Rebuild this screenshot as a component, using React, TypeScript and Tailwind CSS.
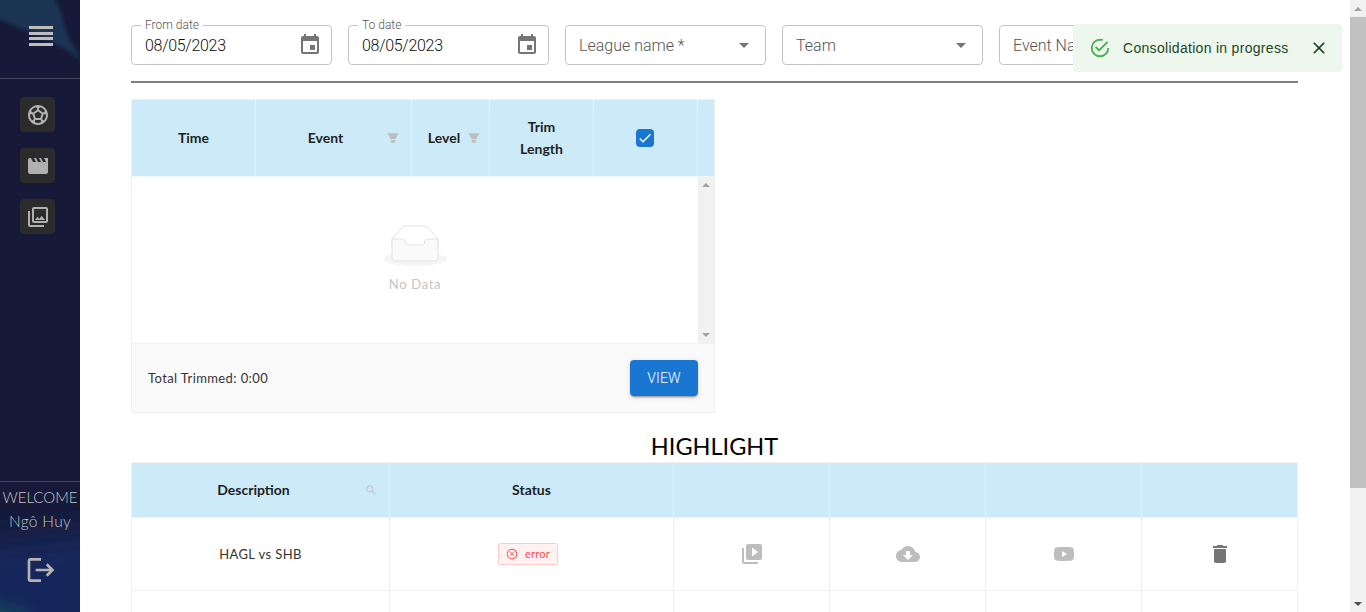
import type { ReactNode } from 'react';
import { AiOutlineCloseCircle, AiOutlineSearch } from 'react-icons/ai';
import {
  MdArrowDropDown,
  MdCheck,
  MdClose,
  MdCloudDownload,
  MdDelete,
  MdEvent,
  MdLogout,
  MdMovie,
  MdOutlinePhotoLibrary,
  MdOutlineSportsSoccer,
  MdVideoLibrary,
} from 'react-icons/md';

function FilterIcon() {
  return (
    <svg viewBox="64 64 896 896" className="h-3 w-3" fill="#bfbfbf">
      <path d="M349 838c0 17.7 14.2 32 31.7 32h262.6c17.5 0 31.7-14.3 31.7-32V642H349v196zm531.1-684H143.9c-24.5 0-39.8 26.7-27.5 48l221.3 376h348.8l221.3-376c12.3-21.3-3-48-27.5-48z" />
    </svg>
  );
}

function YoutubeIcon() {
  return (
    <svg viewBox="0 0 24 24" width="24" height="24" fill="currentColor">
      <path d="M10 15l5.19-3L10 9v6m11.56-7.83c.13.47.22 1.1.28 1.9.07.8.1 1.49.1 2.09L22 12c0 2.19-.16 3.8-.44 4.83-.25.9-.83 1.48-1.73 1.73-.47.13-1.33.22-2.65.28-1.3.07-2.49.1-3.59.1L12 19c-4.19 0-6.8-.16-7.83-.44-.9-.25-1.48-.83-1.73-1.73-.13-.47-.22-1.1-.28-1.9-.07-.8-.1-1.49-.1-2.09L2 12c0-2.19.16-3.8.44-4.83.25-.9.83-1.48 1.73-1.73.47-.13 1.33-.22 2.65-.28 1.3-.07 2.49-.1 3.59-.1L12 5c4.19 0 6.8.16 7.83.44.9.25 1.48.83 1.73 1.73z" />
    </svg>
  );
}

function EmptyIcon() {
  return (
    <svg width="64" height="41" viewBox="0 0 64 41">
      <g transform="translate(0 1)" fill="none" fillRule="evenodd">
        <ellipse fill="#f5f5f5" cx="32" cy="33" rx="32" ry="7" />
        <g fillRule="nonzero" stroke="#e2e2e2">
          <path d="M55 12.76L44.854 1.258C44.367.474 43.656 0 42.907 0H21.093c-.749 0-1.46.474-1.947 1.257L9 12.761V22h46v-9.24z" />
          <path
            d="M41.613 15.931c0-1.605.994-2.93 2.227-2.931H55v18.137C55 33.26 53.68 35 52.05 35h-40.1C10.32 35 9 33.259 9 31.137V13h11.16c1.233 0 2.227 1.323 2.227 2.928v.022c0 1.605 1.005 2.901 2.237 2.901h14.752c1.232 0 2.237-1.308 2.237-2.913v-.007z"
            fill="#fafafa"
          />
        </g>
      </g>
    </svg>
  );
}

// background art of the sidebar
function SidebarArt() {
  return (
    <svg className="absolute inset-0 h-full w-full" viewBox="0 0 80 612" preserveAspectRatio="none">
      <defs>
        <filter id="soft" filterUnits="userSpaceOnUse" x="-60" y="-60" width="200" height="200">
          <feGaussianBlur stdDeviation="2" />
        </filter>
        <filter id="softer" filterUnits="userSpaceOnUse" x="-100" y="400" width="300" height="320">
          <feGaussianBlur stdDeviation="16" />
        </filter>
        <filter id="corner" filterUnits="userSpaceOnUse" x="-100" y="500" width="300" height="220">
          <feGaussianBlur stdDeviation="7" />
        </filter>
      </defs>
      <path d="M-5 -5H52C60 8 62 14 62 18C66 34 74 50 85 64C72 52 58 44 44 38C28 30 12 26 -5 16Z" fill="#1a3654" filter="url(#soft)" />
      <path d="M-40 545L120 525V660H-40Z" fill="#18255a" filter="url(#softer)" />
      <path d="M-20 598L30 612V630H-20Z" fill="#15425e" filter="url(#corner)" />
    </svg>
  );
}

function Field({ label, value, children }: { label?: string; value: string; children?: ReactNode }) {
  return (
    <div className="relative flex h-10 w-[201px] shrink-0 items-center justify-between rounded border border-[#c4c4c4] pl-[13px] pr-[9px] font-['Roboto',sans-serif] text-base">
      {label && (
        <span className="absolute left-[9px] top-[-8px] bg-white px-1 text-xs font-light leading-[14px] text-[#555]">
          {label}
        </span>
      )}
      <span className={`pt-[2px] font-light ${label ? 'tracking-[-0.3px] text-[#111]' : 'text-[#555]'}`}>{value}</span>
      {children}
    </div>
  );
}

function SideButton({ children }: { children: ReactNode }) {
  return (
    <div className="flex h-[35px] w-[35px] items-center justify-center rounded bg-[#2b2b2b] text-[#b0b0b0]">
      {children}
    </div>
  );
}

function Sidebar() {
  return (
    <aside className="relative flex h-full w-20 shrink-0 flex-col overflow-hidden bg-[#161a38] font-['Lato',sans-serif]">
      <SidebarArt />
      <div className="relative flex h-[79px] items-start justify-center border-b border-[#ffffff33] pl-[2px] pt-[26px]">
        <div className="flex w-6 flex-col gap-[2.6px]">
          <span className="h-[3px] bg-[#bdbdbd]" />
          <span className="h-[3px] bg-[#bdbdbd]" />
          <span className="h-[3px] bg-[#bdbdbd]" />
          <span className="h-[3px] bg-[#bdbdbd]" />
        </div>
      </div>
      <nav className="relative flex flex-col gap-4 pl-5 pt-[18px]">
        <SideButton>
          <MdOutlineSportsSoccer size={24} />
        </SideButton>
        <SideButton>
          <MdMovie size={24} />
        </SideButton>
        <SideButton>
          <MdOutlinePhotoLibrary size={24} />
        </SideButton>
      </nav>
      <div className="relative mt-auto flex h-[131px] flex-col items-center border-t border-[#ffffff33] pt-[4px] font-light text-[#c4c4c4]">
        <span className="text-[15px] leading-[22px]">WELCOME</span>
        <span className="mt-[2px] text-[15.5px] leading-[22px] tracking-[0.3px]">Ngô Huy</span>
        <MdLogout size={32} className="ml-[2px] mt-[22px] text-[#b4b4b4]" />
      </div>
    </aside>
  );
}

function ScrollArrow({ down, dark }: { down?: boolean; dark?: boolean }) {
  return (
    <span
      className={`h-0 w-0 border-x-[4px] border-x-transparent ${
        down ? 'border-t-[4px]' : 'border-b-[4px]'
      } ${dark ? 'border-t-[#505050] border-b-[#505050]' : 'border-t-[#a3a3a3] border-b-[#a3a3a3]'}`}
    />
  );
}

function HeaderCell({ children, className = '' }: { children?: ReactNode; className?: string }) {
  return (
    <div className={`relative flex items-center justify-center border-r border-[#e6f4fb] text-center ${className}`}>
      {children}
    </div>
  );
}

function TrimTable() {
  return (
    <section className="w-[584px] border border-[#f0f0f0] font-['Lato',sans-serif] text-sm text-[#1f1f1f]">
      <div className="grid h-[77px] grid-cols-[124px_156px_78px_104px_104px_1fr] border-b border-[#eef6fa] bg-[#cdeaf9] font-bold">
        <HeaderCell>Time</HeaderCell>
        <HeaderCell>
          <span className="pr-[16px]">Event</span>
          <span className="absolute right-[12px] top-[32px]">
            <FilterIcon />
          </span>
        </HeaderCell>
        <HeaderCell>
          <span className="pr-[13px]">Level</span>
          <span className="absolute right-[9px] top-[32px]">
            <FilterIcon />
          </span>
        </HeaderCell>
        <HeaderCell className="leading-[22px]">
          Trim
          <br />
          Length
        </HeaderCell>
        <HeaderCell>
          <span className="flex h-[18px] w-[18px] -translate-x-px items-center justify-center rounded-sm bg-[#1976d2] text-white">
            <MdCheck size={16} />
          </span>
        </HeaderCell>
        <div />
      </div>
      <div className="flex h-[166px]">
        <div className="flex flex-1 flex-col items-center pt-[48px]">
          <EmptyIcon />
          <span className="mt-[8px] text-[13px] leading-5 tracking-[0.7px] text-[#c4c4c4]">No Data</span>
        </div>
        <div className="flex w-4 flex-col items-center justify-between bg-[#f1f1f1] py-[6px]">
          <ScrollArrow />
          <ScrollArrow down />
        </div>
      </div>
      <div className="flex h-[69px] items-center justify-between border-t border-[#f0f0f0] bg-[#fafafa] pl-4 pr-4 text-[13px] tracking-[0.4px] text-[#333]">
        <span>Total Trimmed: 0:00</span>
        <button
          type="button"
          className="h-9 w-[68px] rounded bg-[#1976d2] font-['Roboto',sans-serif] text-sm font-light tracking-[0.2px] text-white shadow-[0_3px_1px_-2px_rgba(0,0,0,.2),0_2px_2px_0_rgba(0,0,0,.14),0_1px_5px_0_rgba(0,0,0,.12)]"
        >
          VIEW
        </button>
      </div>
    </section>
  );
}

function HighlightTable() {
  const cell = 'flex items-center justify-center border-r border-b border-[#f0f0f0]';
  return (
    <section className="border-l border-t border-[#f0f0f0] font-['Lato',sans-serif] text-sm text-[#1f1f1f]">
      <div className="grid h-[54px] grid-cols-[258px_284px_156px_156px_156px_1fr] bg-[#cdeaf9] font-bold">
        <HeaderCell>
          <span className="pr-[14px]">Description</span>
          <AiOutlineSearch size={12} className="absolute right-3 top-[21px] text-[#bfbfbf]" />
        </HeaderCell>
        <HeaderCell>Status</HeaderCell>
        <HeaderCell />
        <HeaderCell />
        <HeaderCell />
        <HeaderCell />
      </div>
      <div className="grid grid-cols-[258px_284px_156px_156px_156px_1fr] border-t border-[#f0f0f0] [&>div]:h-[73px]">
        <div className={`${cell} text-[13px] tracking-[0.4px] text-[#333]`}>HAGL vs SHB</div>
        <div className={`${cell} pr-[7px]`}>
          <span className="flex h-[22px] items-center gap-[7px] rounded-[2px] border border-[#ffccc7] bg-[#fff2f0] px-[7px] text-[#ff4d4f]">
            <AiOutlineCloseCircle size={12} />
            <span className="text-[11px] tracking-[0.2px]">error</span>
          </span>
        </div>
        <div className={`${cell} text-[#bdbdbd]`}>
          <MdVideoLibrary size={24} />
        </div>
        <div className={`${cell} text-[#bdbdbd]`}>
          <MdCloudDownload size={24} />
        </div>
        <div className={`${cell} text-[#bdbdbd]`}>
          <YoutubeIcon />
        </div>
        <div className={`${cell} text-[#757575]`}>
          <MdDelete size={24} />
        </div>
      </div>
      <div className="grid h-12 grid-cols-[258px_284px_156px_156px_156px_1fr]">
        {[0, 1, 2, 3, 4, 5].map((i) => (
          <div key={i} className="border-r border-[#f0f0f0]" />
        ))}
      </div>
    </section>
  );
}

function Toast() {
  return (
    <div className="absolute left-[1073px] top-6 flex h-12 w-[269px] items-center rounded bg-[#edf7ed] pl-4 font-['Liberation_Sans',sans-serif] text-sm tracking-[0.3px] text-[#1e4620]">
      <svg viewBox="0 0 24 24" width="22" height="22" fill="#4caf50" className="shrink-0">
        <path d="M20,12A8,8 0 0,1 12,20A8,8 0 0,1 4,12A8,8 0 0,1 12,4C12.76,4 13.5,4.11 14.2,4.31L15.77,2.74C14.61,2.26 13.34,2 12,2A10,10 0 0,0 2,12A10,10 0 0,0 12,22A10,10 0 0,0 22,12M7.91,10.08L6.5,11.5L11,16L21,6L19.59,4.58L11,13.17L7.91,10.08Z" />
      </svg>
      <span className="ml-3">Consolidation in progress</span>
      <MdClose size={20} className="ml-auto mr-[13px]" />
    </div>
  );
}

export default function App() {
  return (
    <div className="relative flex h-screen overflow-hidden bg-white">
      <Sidebar />
      <main className="min-w-0 flex-1 overflow-hidden pl-[51px] pr-[52px] pt-[25px]">
        <div className="flex gap-4">
          <Field label="From date" value="08/05/2023">
            <MdEvent size={24} className="text-[#757575]" />
          </Field>
          <Field label="To date" value="08/05/2023">
            <MdEvent size={24} className="text-[#757575]" />
          </Field>
          <Field value="League name *">
            <MdArrowDropDown size={24} className="text-[#757575]" />
          </Field>
          <Field value="Team">
            <MdArrowDropDown size={24} className="text-[#757575]" />
          </Field>
          <Field value="Event Name" />
        </div>
        <div className="mt-4 h-0.5 bg-[#808080]" />
        <div className="mt-4">
          <TrimTable />
        </div>
        <h2 className="mt-[17px] text-center font-['Lato',sans-serif] text-[23.5px] leading-8 text-black">HIGHLIGHT</h2>
        <HighlightTable />
      </main>
      <div className="flex h-full w-4 shrink-0 flex-col items-center bg-[#f1f1f1]">
        <div className="flex h-[17px] items-center">
          <ScrollArrow />
        </div>
        <div className="h-[471px] w-full bg-[#c1c1c1]" />
        <div className="mt-auto flex h-[17px] items-center">
          <ScrollArrow down dark />
        </div>
      </div>
      <Toast />
    </div>
  );
}
